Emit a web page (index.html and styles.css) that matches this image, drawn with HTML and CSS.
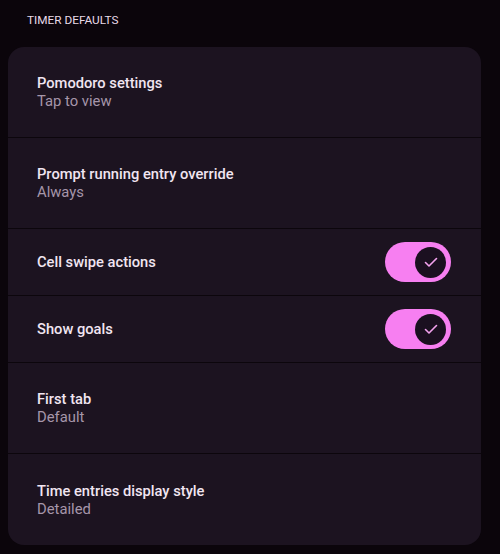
FILE: index.html
```html
<!DOCTYPE html>
<html>
<head>
<meta charset="utf-8">
<link rel="stylesheet" href="styles.css">
</head>
<body>
<div class="page">
  <div class="section-title">TIMER DEFAULTS</div>
  <div class="card">
    <div class="row tall">
      <div class="texts"><div class="title">Pomodoro settings</div><div class="sub">Tap to view</div></div>
    </div>
    <div class="row tall">
      <div class="texts"><div class="title">Prompt running entry override</div><div class="sub">Always</div></div>
    </div>
    <div class="row short">
      <div class="texts"><div class="title">Cell swipe actions</div></div>
      <div class="switch"><div class="thumb"><svg width="16" height="16" viewBox="0 0 16 16"><path d="M2.5 8.5 L6 12 L13.5 4.5" fill="none" stroke="#f4a3ef" stroke-width="1.6" stroke-linecap="round" stroke-linejoin="round"/></svg></div></div>
    </div>
    <div class="row short">
      <div class="texts"><div class="title">Show goals</div></div>
      <div class="switch"><div class="thumb"><svg width="16" height="16" viewBox="0 0 16 16"><path d="M2.5 8.5 L6 12 L13.5 4.5" fill="none" stroke="#f4a3ef" stroke-width="1.6" stroke-linecap="round" stroke-linejoin="round"/></svg></div></div>
    </div>
    <div class="row tall">
      <div class="texts"><div class="title">First tab</div><div class="sub">Default</div></div>
    </div>
    <div class="row tall last">
      <div class="texts"><div class="title">Time entries display style</div><div class="sub">Detailed</div></div>
    </div>
  </div>
</div>
</body>
</html>
```
FILE: styles.css
```css
html, body {
  margin: 0;
  padding: 0;
  background: #0b050b;
}
body {
  font-family: Roboto, "Noto Sans", sans-serif;
  width: 500px;
  height: 554px;
  overflow: hidden;
}
.page {
  display: flex;
  flex-direction: column;
}
.section-title {
  height: 47px;
  padding-left: 27px;
  padding-top: 13px;
  box-sizing: border-box;
  font-size: 11.8px;
  line-height: 14px;
  font-weight: 400;
  color: #e8dae8;
}
.card {
  margin-left: 8px;
  width: 473px;
  background: #1c1320;
  border-radius: 16px;
  display: flex;
  flex-direction: column;
  overflow: hidden;
}
.row {
  display: flex;
  align-items: center;
  justify-content: space-between;
  padding: 0 30px 0 29px;
  border-bottom: 1px solid #0c060c;
}
.row.tall { height: 90px; }
.row.short { height: 66px; }
.row.last { border-bottom: none; height: 91px; }
.title {
  font-size: 14.7px;
  line-height: 18px;
  font-weight: 500;
  color: #f1e5f1;
}
.sub {
  font-size: 14.8px;
  line-height: 18px;
  color: #a696aa;
}
.switch {
  width: 66px;
  height: 40px;
  border-radius: 20px;
  background: #f77ff1;
  display: flex;
  align-items: center;
  justify-content: flex-end;
  padding-right: 5px;
  box-sizing: border-box;
}
.thumb {
  width: 31px;
  height: 31px;
  border-radius: 50%;
  background: #1b1020;
  display: flex;
  align-items: center;
  justify-content: center;
}
```
